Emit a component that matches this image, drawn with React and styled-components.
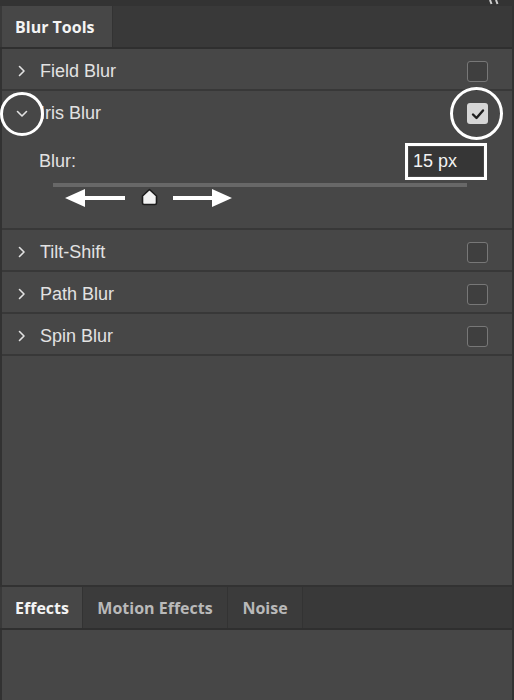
import styled, { createGlobalStyle } from "styled-components";

const GlobalStyle = createGlobalStyle`
    html, body {
        margin: 0;
        padding: 0;
        background: #323232;
    }
`

function Chevron({ open }) {
    if (open) {
        return (
            <svg width="12" height="8" viewBox="0 0 12 8">
                <path d="M1.5 1.5 L6 6 L10.5 1.5" fill="none" stroke="#e2e2e2" strokeWidth="1.6" strokeLinecap="round" strokeLinejoin="round" />
            </svg>
        )
    }
    return (
        <svg width="8" height="12" viewBox="0 0 8 12">
            <path d="M1.5 1.5 L6 6 L1.5 10.5" fill="none" stroke="#e2e2e2" strokeWidth="1.6" strokeLinecap="round" strokeLinejoin="round" />
        </svg>
    )
}

function Row({ label, open, checked, highlight }) {
    return (
        <RowBox $open={open}>
            <Toggle>
                <Chevron open={open} />
                {highlight && <Ring $size={44} $left={-2} $stroke={3.5} />}
            </Toggle>
            <Label>{label}</Label>
            <CheckWrap>
                <Check $checked={checked}>
                    {checked && (
                        <svg width="14" height="12" viewBox="0 0 14 12">
                            <path d="M2 6.5 L5.5 10 L12 2.5" fill="none" stroke="#1e1e1e" strokeWidth="2.4" strokeLinecap="round" strokeLinejoin="round" />
                        </svg>
                    )}
                </Check>
                {highlight && <Ring $size={53} $left={-17} $stroke={3} />}
            </CheckWrap>
        </RowBox>
    )
}

function SliderArrows() {
    return (
        <Arrows width="190" height="22" viewBox="0 0 190 22">
            <path d="M0 10 L20 1 L20 8 L60 8 L60 12 L20 12 L20 19 Z" fill="#ffffff" />
            <path d="M167 10 L147 1 L147 8 L108 8 L108 12 L147 12 L147 19 Z" fill="#ffffff" />
            <path d="M84.5 1.5 L91.5 8 L91.5 15 Q91.5 16.5 90 16.5 L79 16.5 Q77.5 16.5 77.5 15 L77.5 8 Z" fill="#f2f2f2" stroke="#1c1c1c" strokeWidth="1.6" strokeLinejoin="round" />
        </Arrows>
    )
}

export default function App() {
    return (
        <>
            <GlobalStyle />
            <Window>
                <TopStrip>
                    <svg width="12" height="6" viewBox="0 0 12 6">
                        <path d="M2 0 L3.5 4 M8 0 L9.5 4" stroke="#cfcfcf" strokeWidth="2" />
                    </svg>
                </TopStrip>
                <TabBar>
                    <Tab $active $width={111}>Blur Tools</Tab>
                </TabBar>
                <Panel>
                    <Row label="Field Blur" />
                    <Section>
                        <Row label="Iris Blur" open checked highlight />
                        <Settings>
                            <SettingHead>
                                <SettingLabel>Blur:</SettingLabel>
                                <ValueBox>15 px</ValueBox>
                            </SettingHead>
                            <Track />
                            <SliderArrows />
                        </Settings>
                    </Section>
                    <Row label="Tilt-Shift" />
                    <Row label="Path Blur" />
                    <Row label="Spin Blur" />
                </Panel>
                <TabBar $bottom>
                    <Tab $active $width={81}>Effects</Tab>
                    <Tab $width={145}>Motion Effects</Tab>
                    <Tab $width={75}>Noise</Tab>
                </TabBar>
                <Content />
            </Window>
        </>
    )
}

const Window = styled.div`
    width: 514px;
    height: 700px;
    display: flex;
    flex-direction: column;
    background: #323232;
    overflow: hidden;
`
const TopStrip = styled.div`
    height: 6px;
    display: flex;
    justify-content: flex-end;
    padding-right: 14px;
    background: #333333;
`
const TabBar = styled.div`
    height: 41px;
    display: flex;
    padding-left: 2px;
    margin-top: ${p => p.$bottom ? "2px" : "0"};
    margin-right: 2px;
    background: #393939;
    border-bottom: 2px solid #2f2f2f;
`
const Tab = styled.div`
    width: ${p => p.$width}px;
    display: flex;
    align-items: center;
    justify-content: ${p => p.$active && p.$width > 100 ? "flex-start" : "center"};
    padding-left: ${p => p.$active && p.$width > 100 ? "13px" : "0"};
    box-sizing: border-box;
    background: ${p => p.$active ? "#474747" : "#3b3b3b"};
    border-right: 1px solid #333333;
    color: ${p => p.$active ? "#f4f4f4" : "#b9b9b9"};
    font-family: "Open Sans", "Liberation Sans", sans-serif;
    font-weight: 700;
    font-size: 16px;
`
const Panel = styled.div`
    flex: 1;
    margin: 0 2px;
    background: #474747;
`
const Section = styled.div`
    border-bottom: 2px solid #383838;
`
const RowBox = styled.div`
    height: ${p => p.$open ? "41px" : "42px"};
    box-sizing: border-box;
    padding-top: 4px;
    display: flex;
    align-items: center;
    border-bottom: ${p => p.$open ? "none" : "2px solid #383838"};
`
const Toggle = styled.div`
    position: relative;
    width: 38px;
    display: flex;
    justify-content: center;
    align-items: center;
    padding-left: 1px;
    box-sizing: border-box;
`
const Ring = styled.div`
    position: absolute;
    width: ${p => p.$size}px;
    height: ${p => p.$size}px;
    left: ${p => p.$left}px;
    top: 50%;
    margin-top: -${p => p.$size / 2}px;
    box-sizing: border-box;
    border: ${p => p.$stroke}px solid #ffffff;
    border-radius: 50%;
    pointer-events: none;
`
const Label = styled.div`
    flex: 1;
    color: #e2e2e2;
    font-family: "Liberation Sans", Arial, sans-serif;
    font-size: 18px;
`
const CheckWrap = styled.div`
    position: relative;
    width: 21px;
    height: 21px;
    margin-right: 24px;
`
const Check = styled.div`
    width: 21px;
    height: 21px;
    box-sizing: border-box;
    display: flex;
    align-items: center;
    justify-content: center;
    border-radius: 3px;
    border: ${p => p.$checked ? "none" : "1.5px solid #777777"};
    background: ${p => p.$checked ? "#d6d6d6" : "#3f3f3f"};
`
const Settings = styled.div`
    height: 96px;
    padding: 15px 45px 0 51px;
    box-sizing: border-box;
`
const SettingHead = styled.div`
    display: flex;
    align-items: center;
    justify-content: space-between;
    margin-left: -14px;
    margin-right: -16px;
`
const SettingLabel = styled.div`
    color: #e2e2e2;
    font-family: "Liberation Sans", Arial, sans-serif;
    font-size: 18px;
`
const ValueBox = styled.div`
    width: 74px;
    height: 29px;
    box-sizing: border-box;
    display: flex;
    align-items: center;
    padding-left: 4px;
    background: #363636;
    outline: 3px solid #ffffff;
    outline-offset: 1px;
    color: #f2f2f2;
    font-family: "Liberation Sans", Arial, sans-serif;
    font-size: 18px;
`
const Track = styled.div`
    height: 4px;
    margin-top: 7px;
    background: #686868;
`
const Arrows = styled.svg`
    display: block;
    margin-left: 12px;
    margin-top: 1px;
`
const Content = styled.div`
    height: 70px;
    margin: 0 2px;
    background: #474747;
`
